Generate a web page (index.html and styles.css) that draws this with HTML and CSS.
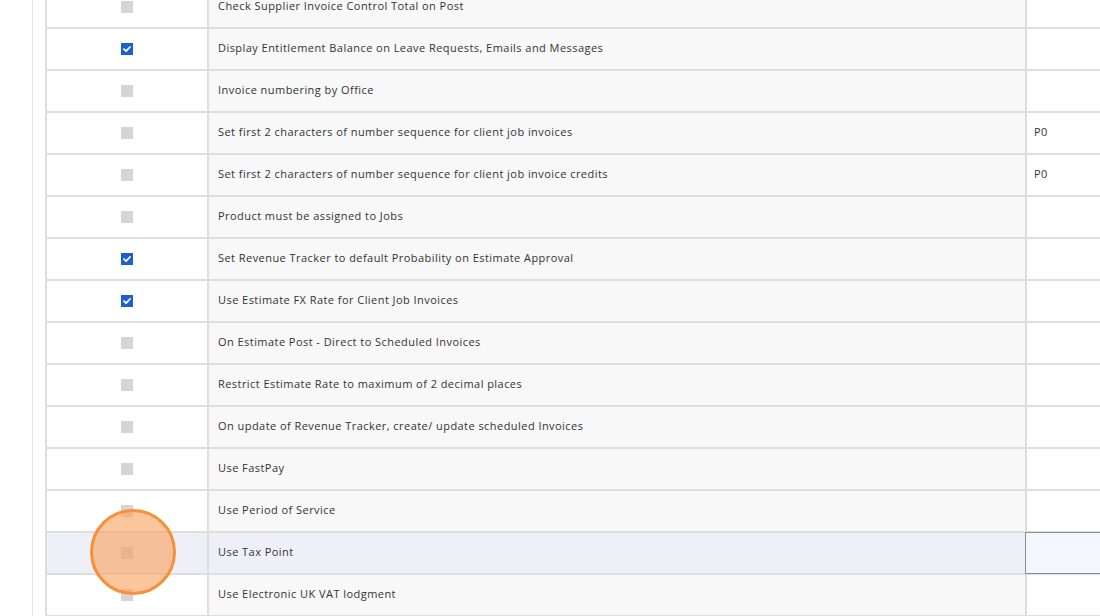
FILE: index.html
```html
<!DOCTYPE html>
<html>
<head>
<meta charset="utf-8">
<link rel="stylesheet" href="styles.css">
</head>
<body>
<div class="page">
  <div class="table">
    <div class="row"><div class="cell cb"><span class="box"></span></div><div class="cell label">Check Supplier Invoice Control Total on Post</div><div class="cell val"></div></div>
    <div class="row"><div class="cell cb"><span class="box on"><svg viewBox="0 0 12 12"><path d="M3 6.2 L5.1 8.2 L9 4" fill="none" stroke="#fff" stroke-width="1.8" stroke-linecap="round" stroke-linejoin="round"/></svg></span></div><div class="cell label">Display Entitlement Balance on Leave Requests, Emails and Messages</div><div class="cell val"></div></div>
    <div class="row"><div class="cell cb"><span class="box"></span></div><div class="cell label">Invoice numbering by Office</div><div class="cell val"></div></div>
    <div class="row"><div class="cell cb"><span class="box"></span></div><div class="cell label">Set first 2 characters of number sequence for client job invoices</div><div class="cell val">P0</div></div>
    <div class="row"><div class="cell cb"><span class="box"></span></div><div class="cell label">Set first 2 characters of number sequence for client job invoice credits</div><div class="cell val">P0</div></div>
    <div class="row"><div class="cell cb"><span class="box"></span></div><div class="cell label">Product must be assigned to Jobs</div><div class="cell val"></div></div>
    <div class="row"><div class="cell cb"><span class="box on"><svg viewBox="0 0 12 12"><path d="M3 6.2 L5.1 8.2 L9 4" fill="none" stroke="#fff" stroke-width="1.8" stroke-linecap="round" stroke-linejoin="round"/></svg></span></div><div class="cell label">Set Revenue Tracker to default Probability on Estimate Approval</div><div class="cell val"></div></div>
    <div class="row"><div class="cell cb"><span class="box on"><svg viewBox="0 0 12 12"><path d="M3 6.2 L5.1 8.2 L9 4" fill="none" stroke="#fff" stroke-width="1.8" stroke-linecap="round" stroke-linejoin="round"/></svg></span></div><div class="cell label">Use Estimate FX Rate for Client Job Invoices</div><div class="cell val"></div></div>
    <div class="row"><div class="cell cb"><span class="box"></span></div><div class="cell label">On Estimate Post - Direct to Scheduled Invoices</div><div class="cell val"></div></div>
    <div class="row"><div class="cell cb"><span class="box"></span></div><div class="cell label">Restrict Estimate Rate to maximum of 2 decimal places</div><div class="cell val"></div></div>
    <div class="row"><div class="cell cb"><span class="box"></span></div><div class="cell label">On update of Revenue Tracker, create/ update scheduled Invoices</div><div class="cell val"></div></div>
    <div class="row"><div class="cell cb"><span class="box"></span></div><div class="cell label">Use FastPay</div><div class="cell val"></div></div>
    <div class="row"><div class="cell cb"><span class="box"></span></div><div class="cell label">Use Period of Service</div><div class="cell val"></div></div>
    <div class="row hl"><div class="cell cb"><span class="box"></span></div><div class="cell label">Use Tax Point</div><div class="cell val"><div class="input"></div></div></div>
    <div class="row"><div class="cell cb"><span class="box"></span></div><div class="cell label">Use Electronic UK VAT lodgment</div><div class="cell val"></div></div>
  </div>
  <div class="click"></div>
</div>
</body>
</html>
```
FILE: styles.css
```css
html, body {
  margin: 0;
  padding: 0;
  background: #fff;
  overflow: hidden;
}
body {
  font-family: "Open Sans", "Noto Sans", sans-serif;
  font-size: 11px;
  letter-spacing: 0.45px;
  color: #333;
}
.page {
  position: relative;
  width: 1100px;
  height: 616px;
  overflow: hidden;
  padding-left: 32px;
  box-sizing: border-box;
}
.table {
  border-left: 1px solid #e4e4e4;
  margin-top: -13px;
  padding-left: 12px;
  width: 1100px;
}
.row {
  display: grid;
  grid-template-columns: 162px 818px 200px;
  height: 42px;
  border-left: 2px solid #dedede;
  border-bottom: 2px solid #dedede;
  box-sizing: border-box;
}
.cell {
  display: flex;
  align-items: center;
  border-right: 2px solid #dedede;
}
.cb {
  justify-content: center;
  background: #fff;
}
.label {
  background: #f8f8f8;
  padding-left: 9px;
  padding-bottom: 3px;
}
.val {
  background: #fff;
  padding-left: 7px;
  padding-bottom: 3px;
}
.row.hl .cb, .row.hl .label {
  background: #efeff8;
}
.row.hl .val {
  padding: 0;
  align-items: stretch;
}
.input {
  flex: 1;
  border: 1px solid #8c8c8c;
  background: #f5f5fd;
  margin-left: -2px;
  margin-top: -1px;
  margin-bottom: -1px;
}
.box {
  width: 12px;
  height: 12px;
  background: #d5d5d5;
  display: block;
}
.box.on {
  background: #1b5fd3;
}
.box svg {
  display: block;
  width: 12px;
  height: 12px;
}
.click {
  position: absolute;
  left: 90px;
  top: 509px;
  width: 80px;
  height: 80px;
  border-radius: 50%;
  border: 3px solid #f5913a;
  background: rgba(248, 160, 90, 0.6);
}
```
